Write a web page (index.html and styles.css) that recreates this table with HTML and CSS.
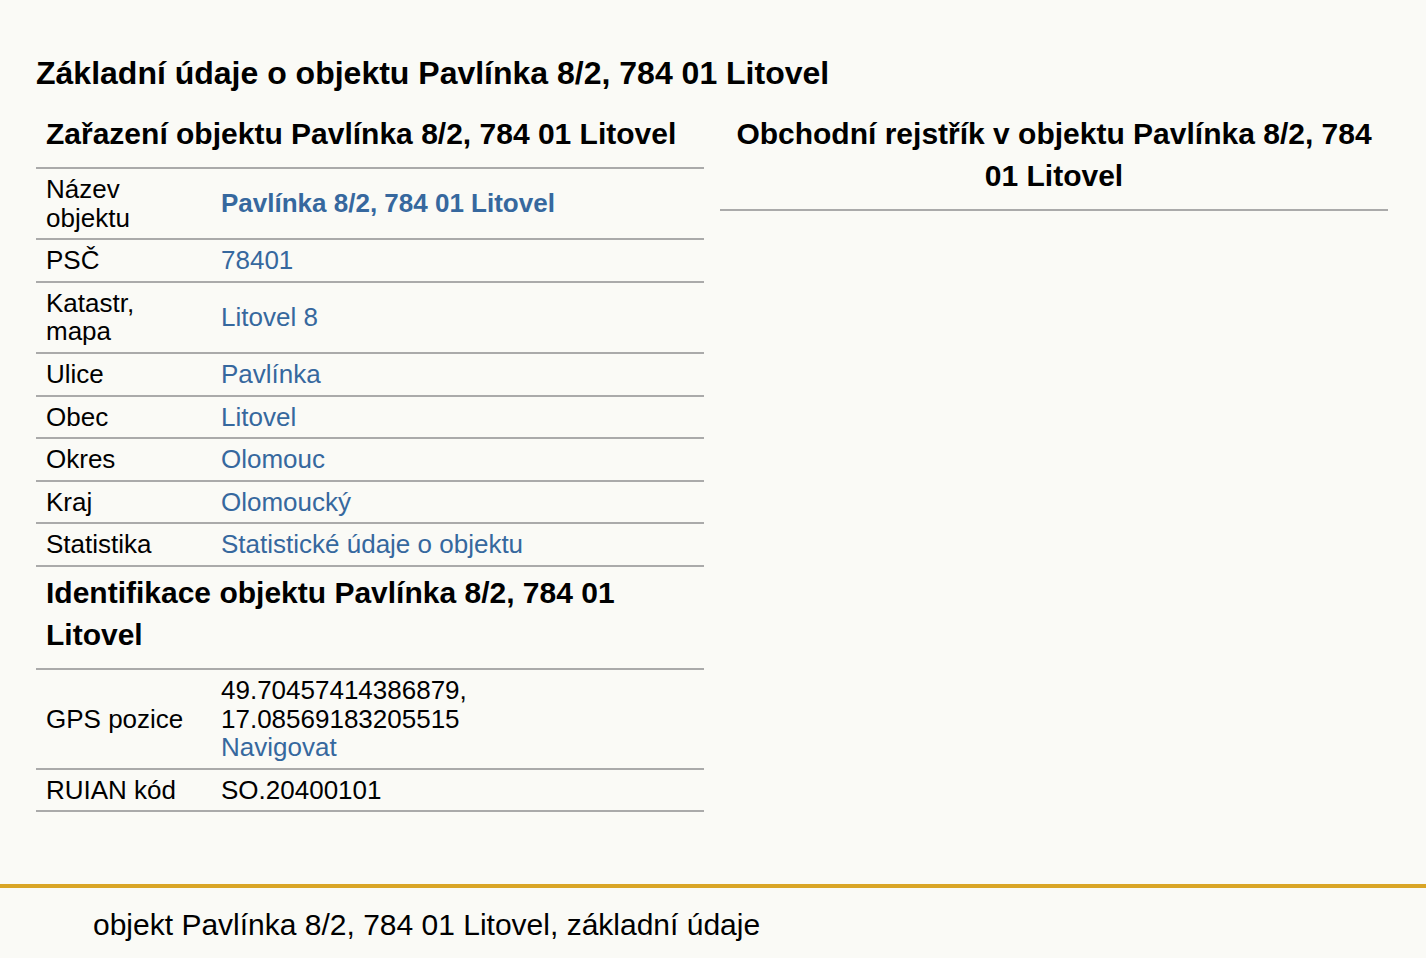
FILE: index.html
```html
<!DOCTYPE html>
<html lang="cs">
<head>
    <meta charset="UTF-8">
    <meta name="viewport" content="width=device-width, initial-scale=1.0">
    <title>objekt Pavlínka 8/2, 784 01 Litovel, základní údaje</title>
    <link rel="stylesheet" href="styles.css">
</head>
<body>

    <div class="content">
        <h1>Základní údaje o objektu Pavlínka 8/2, 784 01 Litovel</h1>

        <div class="columns">
            <!-- Zarazeni + identifikace -->
            <table class="info">
                <tr>
                    <th colspan="2">Zařazení objektu Pavlínka 8/2, 784 01 Litovel</th>
                </tr>
                <tr>
                    <td class="label">Název objektu</td>
                    <td><a href="#" class="strong">Pavlínka 8/2, 784 01 Litovel</a></td>
                </tr>
                <tr>
                    <td class="label">PSČ</td>
                    <td><a href="#">78401</a></td>
                </tr>
                <tr>
                    <td class="label">Katastr, mapa</td>
                    <td><a href="#">Litovel 8</a></td>
                </tr>
                <tr>
                    <td class="label">Ulice</td>
                    <td><a href="#">Pavlínka</a></td>
                </tr>
                <tr>
                    <td class="label">Obec</td>
                    <td><a href="#">Litovel</a></td>
                </tr>
                <tr>
                    <td class="label">Okres</td>
                    <td><a href="#">Olomouc</a></td>
                </tr>
                <tr>
                    <td class="label">Kraj</td>
                    <td><a href="#">Olomoucký</a></td>
                </tr>
                <tr>
                    <td class="label">Statistika</td>
                    <td><a href="#">Statistické údaje o objektu</a></td>
                </tr>
                <tr>
                    <th colspan="2">Identifikace objektu Pavlínka 8/2, 784 01 Litovel</th>
                </tr>
                <tr>
                    <td class="label">GPS pozice</td>
                    <td>49.70457414386879, 17.08569183205515<br><a href="#">Navigovat</a></td>
                </tr>
                <tr>
                    <td class="label">RUIAN kód</td>
                    <td>SO.20400101</td>
                </tr>
            </table>

            <!-- Obchodni rejstrik -->
            <table class="info register">
                <tr>
                    <th>Obchodní rejstřík v objektu Pavlínka 8/2, 784 01 Litovel</th>
                </tr>
            </table>
        </div>
    </div>

    <div class="footer">
        objekt Pavlínka 8/2, 784 01 Litovel, základní údaje
    </div>

</body>
</html>
```

FILE: styles.css
```css
body {
    margin: 0;
    background: #fafaf6;
    color: #000;
    font-family: "Liberation Sans", Arial, sans-serif;
    font-size: 26px;
}

a {
    color: #36689e;
    text-decoration: none;
}

a.strong {
    font-weight: bold;
}

.content {
    padding: 55px 38px 0 36px;
}

h1 {
    font-size: 32px;
    line-height: 36px;
    margin: 0 0 17px 0;
}

/* Two columns */
.columns {
    display: flex;
    align-items: flex-start;
    gap: 16px;
}

.info {
    flex: 1;
    border-collapse: collapse;
}

.info th {
    font-size: 30px;
    line-height: 42px;
    text-align: left;
    padding: 5px 10px 12px 10px;
    border-bottom: 2px solid #aaa;
}

.register th {
    text-align: center;
}

.info td {
    line-height: 28.6px;
    padding: 6px 10px;
    border-bottom: 2px solid #aaa;
    vertical-align: middle;
}

.info td.label {
    width: 155px;
}

/* Footer */
.footer {
    margin-top: 72px;
    border-top: 4px solid #d9a526;
    padding: 19px 0 18px 93px;
    font-size: 30px;
    line-height: 36px;
}
```
